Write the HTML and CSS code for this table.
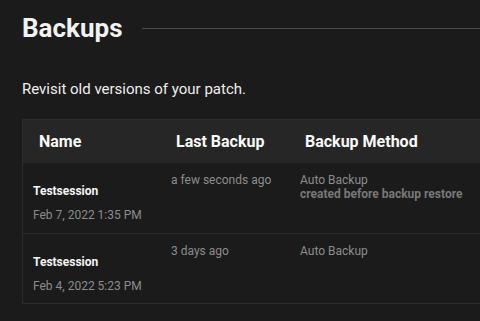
FILE: index.html
```html
<!DOCTYPE html>
<html lang="en">
<head>
  <meta charset="UTF-8">
  <title>Backups</title>
  <link rel="stylesheet" href="styles.css">
</head>
<body>
  <div class="page">
    <div class="title-row">
      <h1>Backups</h1>
      <div class="rule"></div>
    </div>

    <p class="intro">Revisit old versions of your patch.</p>

    <div class="table">
      <div class="thead">
        <div class="th">Name</div>
        <div class="th">Last Backup</div>
        <div class="th">Backup Method</div>
      </div>

      <div class="tr">
        <div class="td name">
          <div class="session">Testsession</div>
          <div class="date">Feb 7, 2022 1:35 PM</div>
        </div>
        <div class="td muted">a few seconds ago</div>
        <div class="td muted">
          Auto Backup
          <div class="note">created before backup restore</div>
        </div>
      </div>

      <div class="tr">
        <div class="td name">
          <div class="session">Testsession</div>
          <div class="date">Feb 4, 2022 5:23 PM</div>
        </div>
        <div class="td muted">3 days ago</div>
        <div class="td muted">Auto Backup</div>
      </div>
    </div>
  </div>
</body>
</html>
```

FILE: styles.css
```css
* {
  margin: 0;
  padding: 0;
  box-sizing: border-box;
  font-family: Roboto, "Liberation Sans", sans-serif;
}

body {
  background: #1b1b1b;
  color: #f2f2f2;
  overflow: hidden;
}

.page {
  padding: 13px 0 0 22px;
  overflow: hidden;
}

.title-row {
  display: flex;
  align-items: center;
  gap: 20px;
}

.title-row h1 {
  font-size: 26px;
  font-weight: 700;
  line-height: 30px;
}

.rule {
  flex: 1;
  height: 1px;
  background: #4a4a4a;
}

.intro {
  font-size: 15px;
  line-height: 18px;
  margin-top: 37px;
  color: #eeeeee;
}

.table {
  width: 520px;
  margin-top: 21px;
  border: 1px solid #2c2c2c;
}

.thead, .tr {
  display: grid;
  grid-template-columns: 137px 129px 1fr;
}

.thead {
  background: #262626;
}

.th {
  font-size: 16px;
  font-weight: 700;
  line-height: 20px;
  padding: 12px 16px 11px;
  color: #fafafa;
}

.tr {
  height: 70px;
  border-top: 1px solid #2c2c2c;
}

.thead + .tr {
  border-top: none;
}

.td {
  font-size: 12px;
  line-height: 14px;
  padding: 10px 11px;
}

.td.name {
  padding-top: 21px;
  padding-left: 10px;
}

.muted {
  color: #8c8c8c;
}

.session {
  font-weight: 700;
  color: #f5f5f5;
  margin-bottom: 10px;
}

.date {
  color: #8c8c8c;
}

.note {
  font-weight: 700;
  color: #787878;
}
```
